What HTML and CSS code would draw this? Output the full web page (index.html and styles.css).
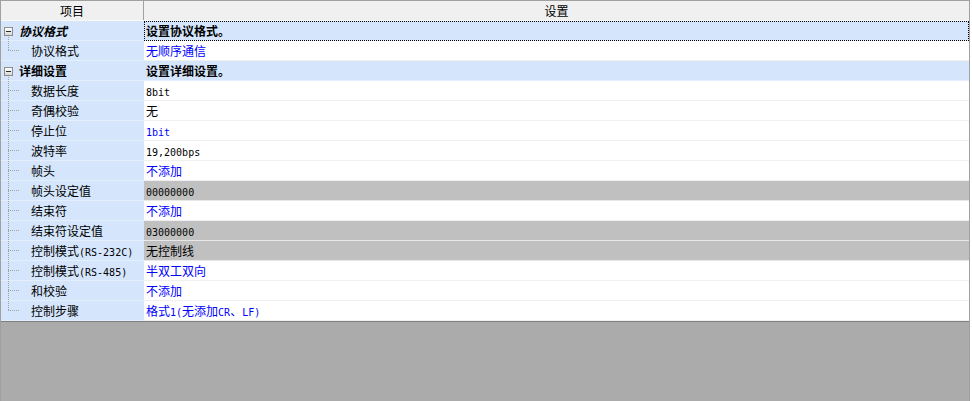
FILE: index.html
```html
<!DOCTYPE html>
<html lang="zh-CN">
<head>
<meta charset="utf-8">
<title>设置</title>
<link rel="stylesheet" href="styles.css">
</head>
<body>
<div class="grid">
  <div class="head">
    <div class="hcell hl">项目</div>
    <div class="hcell hr">设置</div>
  </div>
  <div class="rows">
    <div class="row group">
      <div class="label"><span class="node"><span class="box"></span><span class="stem"></span></span><span class="gtext it">协议格式</span></div>
      <div class="value focus"><b>设置协议格式。</b></div>
    </div>
    <div class="row">
      <div class="label"><span class="twig last"></span><span>协议格式</span></div>
      <div class="value blue">无顺序通信</div>
    </div>
    <div class="row group">
      <div class="label"><span class="node"><span class="box"></span><span class="stem"></span></span><span class="gtext">详细设置</span></div>
      <div class="value"><b>设置详细设置。</b></div>
    </div>
    <div class="row">
      <div class="label"><span class="twig"></span><span>数据长度</span></div>
      <div class="value"><span class="m">8bit</span></div>
    </div>
    <div class="row">
      <div class="label"><span class="twig"></span><span>奇偶校验</span></div>
      <div class="value">无</div>
    </div>
    <div class="row">
      <div class="label"><span class="twig"></span><span>停止位</span></div>
      <div class="value blue"><span class="m">1bit</span></div>
    </div>
    <div class="row">
      <div class="label"><span class="twig"></span><span>波特率</span></div>
      <div class="value"><span class="m">19,200bps</span></div>
    </div>
    <div class="row">
      <div class="label"><span class="twig"></span><span>帧头</span></div>
      <div class="value blue">不添加</div>
    </div>
    <div class="row">
      <div class="label"><span class="twig"></span><span>帧头设定值</span></div>
      <div class="value gray"><span class="m">00000000</span></div>
    </div>
    <div class="row">
      <div class="label"><span class="twig"></span><span>结束符</span></div>
      <div class="value blue">不添加</div>
    </div>
    <div class="row">
      <div class="label"><span class="twig"></span><span>结束符设定值</span></div>
      <div class="value gray"><span class="m">03000000</span></div>
    </div>
    <div class="row">
      <div class="label"><span class="twig"></span><span>控制模式<span class="m">(RS-232C)</span></span></div>
      <div class="value gray">无控制线</div>
    </div>
    <div class="row">
      <div class="label"><span class="twig"></span><span>控制模式<span class="m">(RS-485)</span></span></div>
      <div class="value blue">半双工双向</div>
    </div>
    <div class="row">
      <div class="label"><span class="twig"></span><span>和校验</span></div>
      <div class="value blue">不添加</div>
    </div>
    <div class="row">
      <div class="label"><span class="twig last"></span><span>控制步骤</span></div>
      <div class="value blue">格式<span class="m">1(</span>无添加<span class="m">CR</span>、<span class="m">LF)</span></div>
    </div>
  </div>
  <div class="empty"></div>
</div>
</body>
</html>
```

FILE: styles.css
```css
html, body {
  margin: 0;
  height: 100%;
}
body {
  background: #ffffff;
  font-family: "Noto Sans CJK SC", "Noto Sans CJK JP", sans-serif;
  font-size: 12px;
  color: #000000;
}
.grid {
  width: 968px;
  height: 400px;
  border: 1px solid #a0a0a0;
  border-bottom: 0;
  display: flex;
  flex-direction: column;
}
.head {
  display: flex;
  height: 19px;
  background: #f0f0f0;
  border-bottom: 1px solid #f8f8f8;
}
.hcell {
  line-height: 19px;
  text-align: center;
}
.hl {
  width: 142px;
  border-right: 1px solid #a0a0a0;
}
.hr {
  flex: 1;
}
.rows {
  display: flex;
  flex-direction: column;
}
.row {
  display: flex;
}
.label {
  width: 143px;
  height: 19px;
  line-height: 19px;
  background: #d5e6fc;
  border-bottom: 1px solid #e4eefc;
  display: flex;
  white-space: nowrap;
}
.value {
  flex: 1;
  height: 19px;
  line-height: 19px;
  padding-left: 2px;
  border-bottom: 1px solid #f0f0f0;
  white-space: nowrap;
}
.group .value {
  background: #d5e6fc;
  border-bottom-color: #e4eefc;
}
.group b, .gtext {
  font-weight: bold;
}
.it {
  font-style: italic;
}
.focus {
  outline: 1px dotted #000000;
  outline-offset: -1px;
}
.blue {
  color: #0000ff;
}
.gray {
  background: #c0c0c0;
  border-bottom-color: #e8e8e8;
}
.m {
  font-family: "DejaVu Sans Mono", "Liberation Mono", monospace;
  font-size: 10px;
}
.node {
  width: 9px;
  margin-left: 3px;
  margin-right: 6px;
  display: flex;
  flex-direction: column;
}
.box {
  margin-top: 6px;
  width: 7px;
  height: 7px;
  border: 1px solid #8c8c8c;
  background:
    linear-gradient(#2a2a2a, #2a2a2a) center / 5px 1px no-repeat,
    linear-gradient(#ffffff, #d8d8d8);
}
.stem {
  flex: 1;
  width: 1px;
  margin-left: 4px;
  margin-top: 1px;
  background: linear-gradient(to bottom, #a0a0a0 50%, transparent 50%) 0 0 / 1px 2px repeat-y;
}
.twig {
  width: 12px;
  margin-left: 7px;
  margin-right: 11px;
  background:
    linear-gradient(to bottom, #a0a0a0 50%, transparent 50%) 0 0 / 1px 2px repeat-y,
    linear-gradient(to right, #a0a0a0 50%, transparent 50%) 0 9px / 2px 1px repeat-x;
}
.twig.last {
  align-self: flex-start;
  height: 10px;
}
.empty {
  flex: 1;
  background: #ababab;
  border-top: 1px solid #808080;
}
```
